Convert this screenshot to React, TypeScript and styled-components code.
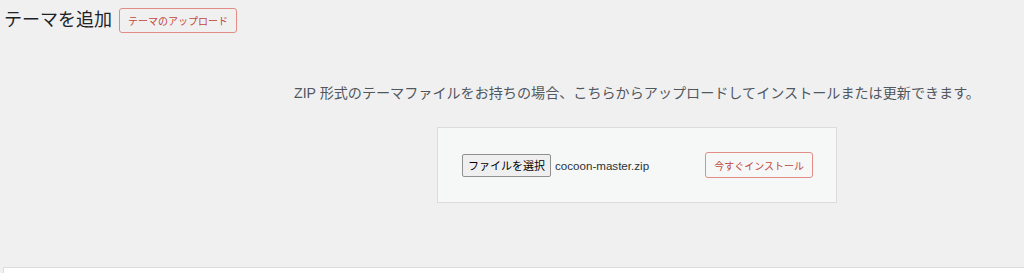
import { createGlobalStyle, styled } from "styled-components";

const GlobalStyle = createGlobalStyle`
  html, body {
    margin: 0;
    padding: 0;
    background: #f0f0f1;
    overflow: hidden;
  }
  body {
    font-family: "Liberation Sans", "Noto Sans CJK JP", sans-serif;
    color: #3c434a;
  }
`;

const Wrap = styled.div`
  width: 1268px;
  padding: 0 0 0 3px;
  box-sizing: content-box;
`;

const HeaderRow = styled.div`
  display: flex;
  align-items: center;
  gap: 7px;
  height: 25px;
  padding: 8px 0 0 1px;
`;

const Title = styled.h1`
  margin: 0;
  font-size: 18px;
  font-weight: 400;
  line-height: 25px;
  color: #1d2327;
`;

const OutlineButton = styled.button<{ $size?: number }>`
  display: inline-flex;
  align-items: center;
  justify-content: center;
  box-sizing: border-box;
  height: ${(p) => (p.$size ? p.$size : 25)}px;
  padding: 0 8px;
  background: transparent;
  border: 1px solid #e28c85;
  border-radius: 3px;
  color: #c0473e;
  font-family: "Noto Sans CJK JP", sans-serif;
  font-size: 10px;
  cursor: pointer;
`;

const Help = styled.p`
  margin: 48px 0 0;
  text-align: center;
  font-size: 14.1px;
  line-height: 24px;
  color: #50575e;
`;

const UploadForm = styled.form`
  width: 400px;
  box-sizing: border-box;
  margin: 22px auto 0;
  padding: 0 23px 0 24px;
  height: 76px;
  display: flex;
  align-items: center;
  justify-content: space-between;
  background: #f6f7f7;
  border: 1px solid #dcdcde;
`;

const FileGroup = styled.div`
  display: flex;
  align-items: center;
  gap: 4px;
`;

const FileButton = styled.span`
  display: inline-flex;
  align-items: center;
  box-sizing: border-box;
  height: 23px;
  padding: 0 5px;
  background: #efefef;
  border: 1px solid #8f8f8f;
  border-radius: 2px;
  font-family: "Noto Sans CJK JP", sans-serif;
  font-size: 11px;
  color: #000;
`;

const FileName = styled.span`
  font-size: 11.6px;
  color: #2c3338;
`;

const Panel = styled.div`
  margin-top: 64px;
  height: 20px;
  background: #fff;
  border: 1px solid #dcdcde;
`;

export default function App() {
  return (
    <>
      <GlobalStyle />
      <Wrap>
        <HeaderRow>
          <Title>テーマを追加</Title>
          <OutlineButton>テーマのアップロード</OutlineButton>
        </HeaderRow>
        <Help>
          ZIP 形式のテーマファイルをお持ちの場合、こちらからアップロードしてインストールまたは更新できます。
        </Help>
        <UploadForm onSubmit={(e) => e.preventDefault()}>
          <FileGroup>
            <FileButton>ファイルを選択</FileButton>
            <FileName>cocoon-master.zip</FileName>
          </FileGroup>
          <OutlineButton $size={26}>今すぐインストール</OutlineButton>
        </UploadForm>
        <Panel />
      </Wrap>
    </>
  );
}
